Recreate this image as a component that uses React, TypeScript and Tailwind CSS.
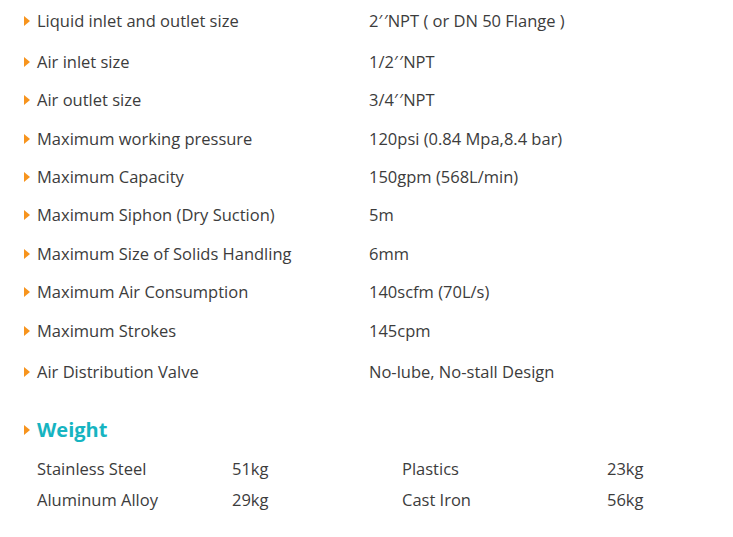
const specs = [
  { label: "Liquid inlet and outlet size", value: "2\u2032\u200a\u2032NPT ( or DN 50 Flange )", mt: "mt-0" },
  { label: "Air inlet size", value: "1/2\u2032\u200a\u2032NPT", mt: "mt-[3px]" },
  { label: "Air outlet size", value: "3/4\u2032\u200a\u2032NPT", mt: "mt-0" },
  { label: "Maximum working pressure", value: "120psi (0.84 Mpa,8.4 bar)", mt: "mt-[1px]" },
  { label: "Maximum Capacity", value: "150gpm (568L/min)", mt: "mt-0" },
  { label: "Maximum Siphon (Dry Suction)", value: "5m", mt: "mt-0" },
  { label: "Maximum Size of Solids Handling", value: "6mm", mt: "mt-[1px]" },
  { label: "Maximum Air Consumption", value: "140scfm (70L/s)", mt: "mt-0" },
  { label: "Maximum Strokes", value: "145cpm", mt: "mt-[1px]" },
  { label: "Air Distribution Valve", value: "No-lube, No-stall Design", mt: "mt-[3px]" },
];

const weights = [
  ["Stainless Steel", "51kg", "Plastics", "23kg"],
  ["Aluminum Alloy", "29kg", "Cast Iron", "56kg"],
];

function Arrow() {
  return (
    <svg width="6" height="10" viewBox="0 0 6 10" className="shrink-0">
      <polygon points="0,0 6,5 0,10" fill="#f7941d" />
    </svg>
  );
}

export default function App() {
  return (
    <div className="w-[733px] h-[537px] bg-white text-[#3c3c3c] text-[16.5px] font-['Open_Sans',sans-serif] pt-[2px]">
      {specs.map((s) => (
        <div key={s.label} className={`flex items-center h-[38px] ${s.mt}`}>
          <div className="flex items-center w-[369px] pl-[24px] gap-[7px]">
            <Arrow />
            <span>{s.label}</span>
          </div>
          <span>{s.value}</span>
        </div>
      ))}

      <div className="flex items-center gap-[7px] pl-[24px] mt-[25px] h-[28px]">
        <Arrow />
        <span className="text-[20px] font-bold text-[#16b4c1]">Weight</span>
      </div>

      <div className="mt-[10px] pl-[37px]">
        {weights.map((w) => (
          <div key={w[0]} className="flex items-center h-[31px]">
            <span className="w-[195px]">{w[0]}</span>
            <span className="w-[170px]">{w[1]}</span>
            <span className="w-[205px]">{w[2]}</span>
            <span>{w[3]}</span>
          </div>
        ))}
      </div>
    </div>
  );
}
